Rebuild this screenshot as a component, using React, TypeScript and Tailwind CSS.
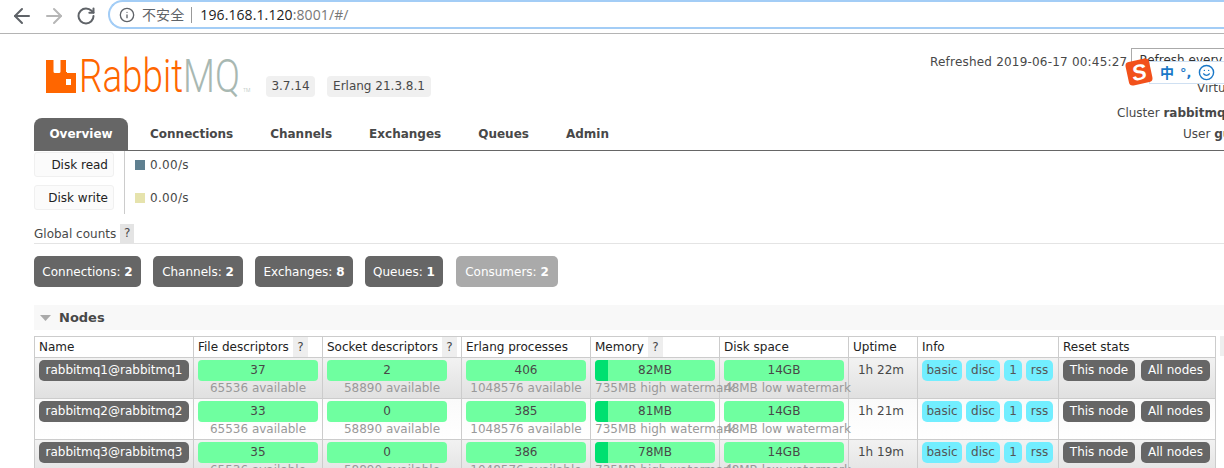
import { ArrowLeft, ArrowRight, Info, RotateCw, Smile } from "lucide-react";

const tabs = ["Connections", "Channels", "Exchanges", "Queues", "Admin"];

const counts = [
  { label: "Connections", value: 2, w: "w-[107px]", bg: "bg-[#666666]" },
  { label: "Channels", value: 2, w: "w-[90px]", bg: "bg-[#666666]" },
  { label: "Exchanges", value: 8, w: "w-[98px]", bg: "bg-[#666666]" },
  { label: "Queues", value: 1, w: "w-[78px]", bg: "bg-[#666666]" },
  { label: "Consumers", value: 2, w: "ml-px w-[102px]", bg: "bg-[#aaaaaa]" },
];

const nodes = [
  { name: "rabbitmq1@rabbitmq1", fd: 37, sd: 2, procs: 406, mem: "82MB", uptime: "1h 22m" },
  { name: "rabbitmq2@rabbitmq2", fd: 33, sd: 0, procs: 385, mem: "81MB", uptime: "1h 21m" },
  { name: "rabbitmq3@rabbitmq3", fd: 35, sd: 0, procs: 386, mem: "78MB", uptime: "1h 19m" },
];

function Help() {
  return <span className="ml-1 inline-block h-5 w-[15px] bg-[#eeeeee] text-center leading-5 text-[#484848]">?</span>;
}

function Stat({ value, sub }: { value: number | string; sub: string }) {
  return (
    <>
      <div className="h-[21px] w-[120px] rounded-[4px] bg-[#6fffa0] text-center leading-[21px]">{value}</div>
      <div className="whitespace-nowrap text-center leading-[15px] text-[#999999]">{sub}</div>
    </>
  );
}

function Mem({ value, sub, divider }: { value: string; sub: string; divider?: boolean }) {
  return (
    <>
      <div className="relative h-[21px] w-[120px] overflow-hidden rounded-[4px] bg-[#6fffa0] text-center leading-[21px]">
        {divider && <div className="absolute inset-y-0 left-0 w-[13px] bg-[#00e070]" />}
        <span className="relative">{value}</span>
      </div>
      <div className="whitespace-nowrap leading-[15px] text-[#999999]">{sub}</div>
    </>
  );
}

function Tag({ text, w }: { text: string; w: string }) {
  return <span className={`${w} h-[21px] rounded-[5px] bg-[#72eeff] text-center leading-[21px] text-[#555555]`}>{text}</span>;
}

function Dark({ text, w }: { text: string; w: string }) {
  return <span className={`${w} h-[21px] rounded-[5px] bg-[#666666] text-center leading-[21px] text-white`}>{text}</span>;
}

export default function App() {
  return (
    <div className="relative h-[468px] w-[1224px] overflow-hidden bg-white font-['DejaVu_Sans',Verdana,sans-serif] text-[12px] text-[#484848]">
      {/* browser bar */}
      <div className="flex h-[34px] items-start border-b border-[#b4b4b4] pl-[10px]">
        <ArrowLeft size={24} strokeWidth={2} className="mt-[4px] shrink-0 text-[#5f6368]" />
        <ArrowRight size={24} strokeWidth={2} className="ml-[8px] mt-[4px] shrink-0 text-[#b6b6b6]" />
        <RotateCw size={20} strokeWidth={2.4} className="ml-[10px] mt-[6px] shrink-0 text-[#5f6368]" />
        <div className="ml-[12px] flex h-[29px] w-[1200px] shrink-0 items-center rounded-l-[15px] border-2 border-r-0 border-[#a3cdf6] pl-[9px] font-['Open_Sans','Noto_Sans_CJK_SC',sans-serif] text-[14px] tracking-[0.1px]">
          <Info size={16} strokeWidth={2} className="text-[#5f6368]" />
          <span className="ml-[7px] font-['Noto_Sans_CJK_SC',sans-serif] text-[14px] text-[#5f6368]">不安全</span>
          <span className="ml-[7px] h-[16px] w-px bg-[#999999]" />
          <span className="ml-[8px] text-[#222222]">196.168.1.120</span>
          <span className="text-[#777777]">:8001/#/</span>
        </div>
      </div>

      {/* header */}
      <div className="flex h-[84px] pl-[46px]">
        <div className="mt-[26px] flex h-[33px] w-[220px] shrink-0 items-start">
          <svg width="30" height="33" viewBox="0 0 30 33" className="shrink-0">
            <path
              fillRule="evenodd"
              fill="#ff6600"
              d="M0 0h7.5v11.5q0 1.5 1.5 1.5h4q1.5 0 1.5-1.5V0H20v12h1V13h9v20H0zM20 19h5v6h-5z"
            />
          </svg>
          <div className="relative h-[33px] w-[180px] font-['Roboto',Arial,sans-serif] text-[46px] font-light leading-[33px] whitespace-nowrap">
            <span className="absolute left-[3px] top-0 inline-block origin-left scale-x-[0.8]">
              <span className="text-[#ff6600]">Rabbit</span>
              <span className="text-[#a8b8b2]">MQ</span>
            </span>
            <span className="absolute left-[167px] top-[27px] text-[5px] leading-[6px] text-[#a8b8b2]">TM</span>
          </div>
        </div>
        <div className="mt-[42px] flex h-[21px] shrink-0 gap-[12px] whitespace-nowrap">
          <span className="h-[21px] w-[49px] rounded-[4px] bg-[#f0f0f0] text-center leading-[21px]">3.7.14</span>
          <span className="h-[21px] w-[104px] rounded-[4px] bg-[#f0f0f0] text-center leading-[21px]">Erlang 21.3.8.1</span>
        </div>
        <div className="ml-[499px] w-[300px] shrink-0 whitespace-nowrap">
          <div className="mt-[14px] flex h-[26px] items-start">
            <span className="mt-[5px] tracking-[0.2px]">Refreshed 2019-06-17 00:45:27</span>
            <span className="ml-[4px] h-[24px] w-[120px] border border-[#aaaaaa] pl-[7px] leading-[22px] text-[#333333]">Refresh every</span>
          </div>
          <div className="ml-[267px] mt-[6px] leading-[16px]">Virtual host</div>
          <div className="ml-[187px] mt-[9px] leading-[16px]">
            Cluster <b>rabbitmq1@rabbitmq1</b>
          </div>
          <div className="ml-[253px] mt-[5px] leading-[16px]">
            User <b>guest</b>
          </div>
        </div>
      </div>

      {/* tabs */}
      <div className="ml-[34px] flex h-[33px] w-[1190px] items-start border-b border-[#666666] font-bold">
        <span className="h-[32px] w-[94px] rounded-t-[8px] bg-[#666666] text-center leading-[32px] text-white">Overview</span>
        <div className="ml-[22px] flex gap-[37px] leading-[32px]">
          {tabs.map((t) => (
            <span key={t}>{t}</span>
          ))}
        </div>
      </div>

      <div className="pl-[34px]">
        {/* disk chart */}
        <div className="flex h-[63px]">
          <div className="flex w-[91px] flex-col gap-[8px] border-r border-[#cccccc] pt-[1px]">
            <span className="h-[25px] w-[80px] rounded-[3px] border border-[#f0f0f0] bg-[#fbfbfb] pr-[5px] text-right leading-[25px] text-[#222222]">Disk read</span>
            <span className="h-[25px] w-[80px] rounded-[3px] border border-[#f0f0f0] bg-[#fbfbfb] pr-[5px] text-right leading-[25px] text-[#222222]">Disk write</span>
          </div>
          <div className="ml-[10px] flex flex-col gap-[23px] pt-[9px]">
            <div className="flex h-[10px] items-center gap-[5px]">
              <span className="h-[10px] w-[10px] bg-[#5f8090]" />
              <span className="tracking-[0.3px]">0.00/s</span>
            </div>
            <div className="flex h-[10px] items-center gap-[5px]">
              <span className="h-[10px] w-[10px] bg-[#e6e3ad]" />
              <span className="tracking-[0.3px]">0.00/s</span>
            </div>
          </div>
        </div>

        {/* global counts */}
        <div className="mt-[10px] flex h-[20px] w-[1190px] items-center border-b border-[#e4e4e4]">
          <span>Global counts</span>
          <span className="ml-[4px] h-[19px] w-[14px] bg-[#e4e4e4] text-center leading-[19px]">?</span>
        </div>
        <div className="mt-[12px] flex h-[31px] gap-[12px]">
          {counts.map((c) => (
            <span key={c.label} className={`${c.w} ${c.bg} rounded-[5px] text-center leading-[32px] text-white`}>
              {c.label}: <b>{c.value}</b>
            </span>
          ))}
        </div>

        {/* nodes */}
        <div className="mt-[18px] flex h-[25px] w-[1190px] items-center bg-[#f8f8f8] pl-[6px]">
          <svg width="11" height="6" viewBox="0 0 11 6">
            <path d="M0 0h11L5.5 6z" fill="#aaaaaa" />
          </svg>
          <b className="ml-[8px] text-[13px]">Nodes</b>
        </div>

        <div className="mt-[6px] flex items-start gap-[4px]">
          <table className="w-[1181px] table-fixed border-collapse">
            <colgroup>
              <col className="w-[159px]" />
              <col className="w-[129px]" />
              <col className="w-[139px]" />
              <col className="w-[129px]" />
              <col className="w-[129px]" />
              <col className="w-[129px]" />
              <col className="w-[69px]" />
              <col className="w-[141px]" />
              <col className="w-[157px]" />
            </colgroup>
            <thead>
              <tr className="h-[20px] text-left text-[#222222]">
                <th className="border border-[#cccccc] pl-[4px] font-normal">Name</th>
                <th className="border border-[#cccccc] pl-[4px] font-normal whitespace-nowrap">File descriptors<Help /></th>
                <th className="border border-[#cccccc] pl-[4px] font-normal whitespace-nowrap">Socket descriptors<Help /></th>
                <th className="border border-[#cccccc] pl-[4px] font-normal">Erlang processes</th>
                <th className="border border-[#cccccc] pl-[4px] font-normal">Memory<Help /></th>
                <th className="border border-[#cccccc] pl-[4px] font-normal">Disk space</th>
                <th className="border border-[#cccccc] pl-[4px] font-normal">Uptime</th>
                <th className="border border-[#cccccc] pl-[4px] font-normal">Info</th>
                <th className="border border-[#cccccc] pl-[4px] font-normal">Reset stats</th>
              </tr>
            </thead>
            <tbody>
              {nodes.map((n, i) => (
                <tr
                  key={n.name}
                  className={`h-[41px] ${i % 2 === 0 ? "bg-gradient-to-b from-[#f2f2f2] to-[#e0e0e0]" : "bg-gradient-to-b from-[#fafafa] to-white"}`}
                >
                  <td className="border border-[#cccccc] px-[4px] pt-[2px] align-top">
                    <div className="h-[21px] w-[150px] rounded-[5px] bg-[#666666] text-center leading-[21px] whitespace-nowrap text-white">{n.name}</div>
                  </td>
                  <td className="border border-[#cccccc] px-[4px] pt-[2px] align-top"><Stat value={n.fd} sub="65536 available" /></td>
                  <td className="border border-[#cccccc] px-[4px] pt-[2px] align-top"><Stat value={n.sd} sub="58890 available" /></td>
                  <td className="border border-[#cccccc] px-[4px] pt-[2px] align-top"><Stat value={n.procs} sub="1048576 available" /></td>
                  <td className="border border-[#cccccc] px-[4px] pt-[2px] align-top"><Mem value={n.mem} sub="735MB high watermark" divider /></td>
                  <td className="border border-[#cccccc] px-[4px] pt-[2px] align-top"><Mem value="14GB" sub="48MB low watermark" /></td>
                  <td className="border border-[#cccccc] pl-[4px] pr-[8px] pt-[2px] align-top text-center leading-[21px] whitespace-nowrap">{n.uptime}</td>
                  <td className="border border-[#cccccc] px-[4px] pt-[2px] align-top">
                    <div className="flex gap-[4px]">
                      <Tag text="basic" w="w-[40px]" />
                      <Tag text="disc" w="w-[34px]" />
                      <Tag text="1" w="w-[18px]" />
                      <Tag text="rss" w="w-[27px]" />
                    </div>
                  </td>
                  <td className="border border-[#cccccc] px-[4px] pt-[2px] align-top">
                    <div className="flex gap-[6px]">
                      <Dark text="This node" w="w-[72px]" />
                      <Dark text="All nodes" w="w-[69px]" />
                    </div>
                  </td>
                </tr>
              ))}
            </tbody>
          </table>
          <div className="h-[20px] w-[10px] shrink-0 bg-[#eeeeee]" />
        </div>
      </div>

      {/* sogou input bar */}
      <div className="absolute left-[1127px] top-[60px] flex items-center">
        <div className="z-10 flex h-[24px] w-[24px] -rotate-12 items-center justify-center rounded-[4px] bg-[#f2511b] font-['Liberation_Sans',sans-serif] text-[22px] font-bold italic text-white">S</div>
        <div className="-ml-[2px] flex h-[23px] w-[80px] items-center border border-[#cfe0f2] bg-white pl-[10px] text-[#1a78c8]">
          <span className="font-['Noto_Sans_CJK_SC',sans-serif] text-[14px] font-bold">中</span>
          <span className="ml-[6px] text-[13px] font-bold leading-none">°,</span>
          <Smile size={17} strokeWidth={2} className="ml-[7px]" />
        </div>
      </div>
    </div>
  );
}
